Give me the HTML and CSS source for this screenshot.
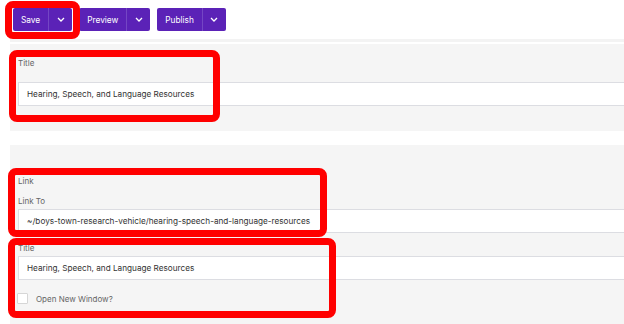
FILE: index.html
```html
<!DOCTYPE html>
<html lang="en">
<head>
    <meta charset="UTF-8">
    <title>Edit Link</title>
    <link rel="stylesheet" href="styles.css">
</head>
<body>
  <div class="toolbar">
    <div class="btn">
      <span class="btn-text">Save</span>
      <span class="btn-caret"><svg width="8" height="5" viewBox="0 0 8 5"><path d="M1 1l3 3 3-3" fill="none" stroke="#fff" stroke-width="1.3"/></svg></span>
    </div>
    <div class="btn">
      <span class="btn-text">Preview</span>
      <span class="btn-caret"><svg width="8" height="5" viewBox="0 0 8 5"><path d="M1 1l3 3 3-3" fill="none" stroke="#fff" stroke-width="1.3"/></svg></span>
    </div>
    <div class="btn">
      <span class="btn-text">Publish</span>
      <span class="btn-caret"><svg width="8" height="5" viewBox="0 0 8 5"><path d="M1 1l3 3 3-3" fill="none" stroke="#fff" stroke-width="1.3"/></svg></span>
    </div>
  </div>
  <div class="strip"></div>

  <div class="panel panel-title">
    <div class="label">Title</div>
    <div class="inp">Hearing, Speech, and Language Resources</div>
  </div>

  <div class="panel panel-link">
    <div class="label label-link">Link</div>
    <div class="label label-to">Link To</div>
    <div class="inp">~/boys-town-research-vehicle/hearing-speech-and-language-resources</div>
    <div class="label label-title">Title</div>
    <div class="inp">Hearing, Speech, and Language Resources</div>
    <div class="check">
      <span class="box"></span>
      <span>Open New Window?</span>
    </div>
  </div>

  <!-- highlight marks -->
  <div class="mark mark-save"></div>
  <div class="mark mark-title"></div>
  <div class="mark mark-link"></div>
  <div class="mark mark-link-title"></div>
</body>
</html>
```

FILE: styles.css
```css
html,body,div,span{margin:0;padding:0;}
html,body{
  width:100%;
  height:100%;
  overflow:hidden;
  background-color:#fff;
  font-family:"Inter","Liberation Sans",sans-serif;
}
.toolbar{
  display:flex;
  gap:7px;
  padding:8px 0 0 13px;
  height:23px;
}
.btn{
  display:flex;
  height:23px;
  background-color:#5b22b7;
  border-radius:2px;
  color:#fff;
  font-size:8.3px;
}
.btn-text{
  display:flex;
  align-items:center;
  padding:0 8px;
}
.btn-caret{
  display:flex;
  align-items:center;
  justify-content:center;
  width:23px;
  border-left:1px solid #7446c4;
}
.strip{
  margin:8px 0 0 10px;
  height:3px;
  background-color:#f3f3f3;
}
.panel{
  margin-left:10px;
  background-color:#f5f5f5;
}
.panel-title{
  margin-top:2px;
  height:87px;
  padding-top:13px;
  box-sizing:border-box;
}
.panel-link{
  margin-top:14px;
  height:180px;
  padding-top:30px;
  box-sizing:border-box;
}
.label{
  font-size:8px;
  color:#666;
  padding-left:8px;
  height:12px;
  line-height:12px;
}
.panel-title .label{
  margin-bottom:13px;
}
.label-to{
  margin-top:8px;
  margin-bottom:2px;
}
.label-title{
  margin-top:9px;
  margin-bottom:2px;
}
.inp{
  margin-left:8px;
  height:22px;
  line-height:22px;
  background:#fff;
  border:1px solid #dcdde2;
  border-right:none;
  padding-left:8px;
  font-size:8.2px;
  color:#333;
}
.check{
  display:flex;
  align-items:center;
  gap:8px;
  margin:13px 0 0 7px;
  font-size:8px;
  color:#666;
}
.box{
  width:9px;
  height:9px;
  background:#fff;
  border:1px solid #d6d6d6;
  border-radius:1px;
}
.mark{
  position:absolute;
  border:7px solid #ff0000;
  border-radius:8px;
  box-sizing:border-box;
}
.mark-save{
  left:5px;
  top:1px;
  width:75px;
  height:38px;
}
.mark-title{
  left:9px;
  top:50px;
  width:211px;
  height:72px;
}
.mark-link{
  left:8px;
  top:168px;
  width:319px;
  height:69px;
}
.mark-link-title{
  left:8px;
  top:238px;
  width:328px;
  height:80px;
}
```
